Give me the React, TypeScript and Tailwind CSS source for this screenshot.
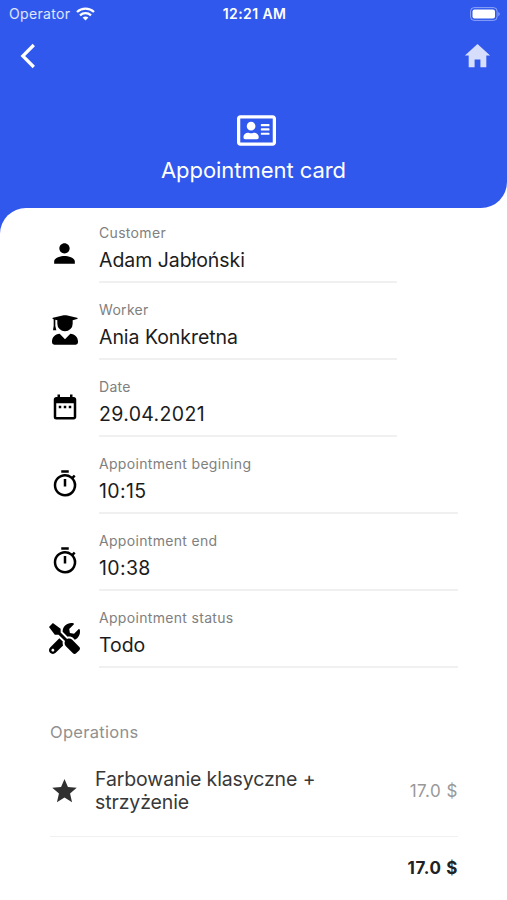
import type { ComponentType } from "react";
import { FaRegAddressCard, FaTools } from "react-icons/fa";
import { IoMdHome, IoMdStar } from "react-icons/io";
import { MdOutlineTimer, MdPerson, MdDateRange } from "react-icons/md";

type IconProps = { size?: number | string; className?: string };

type Detail = {
  icon: ComponentType<IconProps>;
  size: number;
  label: string;
  value: string;
  short?: boolean;
  numeric?: boolean;
};

const GraduateIcon = ({ size = 30, className }: IconProps) => (
  <svg height={size} viewBox="0 0 78 90" fill="currentColor" className={className}>
    <path d="M3 8 35 1q4-1 8 0l32 7q5 2 0 4l-13 4v10a23 23 0 0 1-46 0V16l-6-1.500V33l3 13H3l2-13V13l-2-1q-4-2 0-4Z" />
    <path d="M23 56 39 73 55 56C69 57 78 67 78 79v3q0 7-7 7H7q-7 0-7-7v-3C0 67 9 57 23 56Z" />
  </svg>
);

const details: Detail[] = [
  { icon: MdPerson, size: 31, label: "Customer", value: "Adam Jabłoński", short: true },
  { icon: GraduateIcon, size: 30, label: "Worker", value: "Ania Konkretna", short: true },
  { icon: MdDateRange, size: 30, label: "Date", value: "29.04.2021", short: true, numeric: true },
  { icon: MdOutlineTimer, size: 30, label: "Appointment begining", value: "10:15", numeric: true },
  { icon: MdOutlineTimer, size: 30, label: "Appointment end", value: "10:38", numeric: true },
  { icon: FaTools, size: 31, label: "Appointment status", value: "Todo" },
];

const StatusBar = () => (
  <div className="grid h-7 grid-cols-3 items-center pl-[9px] pr-[7px] text-sm leading-none">
    <div className="flex items-center gap-[6px] text-white/85">
      <span className="tracking-[0.35px]">Operator</span>
      <svg width="19" height="14" viewBox="0 0 19 14" fill="none" stroke="white" strokeWidth="2.3">
        <path d="M1 5C5.8 .4 13.200 .4 18 5" />
        <path d="M4 8.300C7.200 5.400 11.800 5.400 15 8.300" />
        <path d="M6.600 10.500Q9.500 8.400 12.400 10.500L9.500 13.500Z" fill="white" stroke="none" />
      </svg>
    </div>
    <span className="text-center font-semibold tracking-[0.4px]">12:21 AM</span>
    <svg className="justify-self-end" width="30" height="14" viewBox="0 0 30 14">
      <rect x=".6" y=".6" width="26.500" height="12.800" rx="3.600" fill="none" stroke="white" strokeOpacity=".45" />
      <rect x="2.500" y="2.500" width="22.500" height="9" rx="2" fill="white" />
      <path d="M28.400 5v4.200c1.600-.6 1.600-3.600 0-4.200Z" fill="white" fillOpacity=".5" />
    </svg>
  </div>
);

const Header = () => (
  <header className="h-[208px] rounded-br-[26px] bg-[#3058ed] text-white">
    <StatusBar />
    <div className="flex h-14 items-center justify-between pl-5 pr-[14px]">
      <button aria-label="Back">
        <svg width="16" height="26" viewBox="0 0 16 26" fill="none" stroke="white" strokeWidth="3.200">
          <path d="M13.800 2 2.800 13l11 11" />
        </svg>
      </button>
      <button aria-label="Home" className="-mt-[2px] text-white/80">
        <IoMdHome size={31} />
      </button>
    </div>
    <div className="mt-[27px] flex flex-col items-center">
      <FaRegAddressCard size={39} className="ml-[5px]" />
      <h1 className="mt-[6px] text-[22px] leading-7 tracking-[-0.05px]">Appointment card</h1>
    </div>
  </header>
);

const DetailRow = ({ detail }: { detail: Detail }) => (
  <div className="flex h-[77px]">
    <div className="flex w-[29px] shrink-0 justify-center pt-[30px]">
      <detail.icon size={detail.size} className="shrink-0" />
    </div>
    <div
      className={`ml-5 h-[75px] border-b-2 border-[#f0f0f0] pt-4 ${
        detail.short ? "w-[298px]" : "w-[359px]"
      }`}
    >
      <p className="text-sm leading-[18px] tracking-[0.32px] text-[#808080]">{detail.label}</p>
      <p
        className={`mt-[6px] text-[19.5px] leading-6 text-[#1c1c1c] ${
          detail.numeric ? "tracking-[0.35px]" : "tracking-[-0.05px]"
        }`}
      >
        {detail.value}
      </p>
    </div>
  </div>
);

const App = () => {
  return (
    <div className="h-[900px] w-full overflow-hidden bg-white font-['Inter',sans-serif]">
      <Header />
      <div className="bg-[linear-gradient(#3058ed_0_26px,white_26px)]">
        <main className="rounded-tl-[26px] bg-white pl-[50px] pr-[49px]">
          {details.map((detail) => (
            <DetailRow key={detail.label} detail={detail} />
          ))}

          <h2 className="pt-[50px] text-[16.5px] leading-6 tracking-[0.3px] text-[#909090]">
            Operations
          </h2>
          <div className="mt-[23px] flex h-[70px] items-start border-b border-[#f0f0f0]">
            <IoMdStar size={31} className="-ml-px mt-2 shrink-0 text-[#303030]" />
            <p className="ml-[15px] mt-px w-[240px] text-[19.5px] leading-[23px] tracking-[-0.12px] text-[#383838]">
              Farbowanie klasyczne + strzyżenie
            </p>
            <span className="ml-auto mt-3 text-[17px] leading-6 tracking-[0.5px] text-[#999]">
              17.0 $
            </span>
          </div>
          <p className="mt-[19px] text-right text-[17px] font-bold leading-6 tracking-[0.6px] text-[#222]">
            17.0 $
          </p>
        </main>
      </div>
    </div>
  );
};

export default App;
